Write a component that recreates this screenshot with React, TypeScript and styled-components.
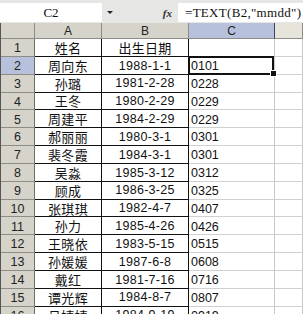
import React from "react";
import styled, { createGlobalStyle } from "styled-components";

const GlobalStyle = createGlobalStyle`
    html, body {
        margin: 0;
        padding: 0;
        background: #ffffff;
        overflow: hidden;
    }
`;

const ROW_H = 17.85;

const rows = [
    ["周向东", "1988-1-1", "0101"],
    ["孙璐", "1981-2-28", "0228"],
    ["王冬", "1980-2-29", "0229"],
    ["周建平", "1984-2-29", "0229"],
    ["郝丽丽", "1980-3-1", "0301"],
    ["裴冬霞", "1984-3-1", "0301"],
    ["吴淼", "1985-3-12", "0312"],
    ["顾成", "1986-3-25", "0325"],
    ["张琪琪", "1982-4-7", "0407"],
    ["孙力", "1985-4-26", "0426"],
    ["王晓依", "1983-5-15", "0515"],
    ["孙媛媛", "1987-6-8", "0608"],
    ["戴红", "1981-7-16", "0716"],
    ["谭光辉", "1984-8-7", "0807"],
    ["吕婧婧", "1984-9-19", "0919"],
];

const Page = styled.div`
    width: 303px;
    height: 314px;
    overflow: hidden;
    background: #ffffff;
`;

// formula bar
const FormulaBar = styled.div`
    display: flex;
    height: 23px;
    box-sizing: border-box;
    padding-top: 3px;
    padding-bottom: 1px;
    background: #e6e6e4;
`;

const NameBox = styled.div`
    width: 102px;
    background: #ffffff;
    display: flex;
    align-items: center;
    justify-content: center;
    font: 13px/1 "Liberation Serif", serif;
    color: #111;
`;

const DropButton = styled.div`
    width: 16px;
    display: flex;
    align-items: center;
    justify-content: center;
    &::after {
        content: "";
        border-left: 3px solid transparent;
        border-right: 3px solid transparent;
        border-top: 3px solid #222;
    }
`;

const FxLabel = styled.div`
    width: 60px;
    display: flex;
    align-items: center;
    justify-content: flex-end;
    padding-right: 6px;
    box-sizing: border-box;
    font: italic bold 11px "Liberation Serif", serif;
    color: #333;
`;

const FormulaField = styled.div`
    flex: 1;
    background: #ffffff;
    display: flex;
    align-items: center;
    padding-left: 7px;
    white-space: nowrap;
    overflow: hidden;
    font: 13px/1 "Liberation Serif", serif;
    letter-spacing: 0.3px;
    color: #111;
`;

// sheet
const Sheet = styled.div`
    display: grid;
    grid-template-columns: 34px 67px 87px 86px 1fr;
    grid-template-rows: 16px repeat(16, ${ROW_H}px);
    border-left: 1px solid #555;
`;

const Header = styled.div<{ $selected?: boolean; $light?: boolean }>`
    box-sizing: border-box;
    background: ${(p) => (p.$selected ? "#b7c1dc" : p.$light ? "#e7e4dc" : "#d6d3cb")};
    border-right: 1px solid ${(p) => (p.$selected ? "#3c4660" : "#8e8c86")};
    border-bottom: 1px solid #8e8c86;
    display: flex;
    align-items: center;
    justify-content: center;
    font: 12px/1 "Liberation Sans", sans-serif;
    color: #222;
`;

const RowHead = styled(Header)`
    border-right-color: #6e6c66;
    padding-top: 2px;
    font-size: 12.5px;
`;

const Cell = styled.div<{ $cjk?: boolean }>`
    box-sizing: border-box;
    border-right: 1px solid #111;
    border-bottom: 1px solid #111;
    display: flex;
    align-items: center;
    justify-content: center;
    white-space: nowrap;
    color: #111;
    font: ${(p) =>
        p.$cjk
            ? `13px/1 "Noto Sans CJK SC", sans-serif`
            : `12.5px/1 "Liberation Sans", sans-serif`};
    letter-spacing: ${(p) => (p.$cjk ? "0.3px" : "0.3px")};
    padding-top: ${(p) => (p.$cjk ? "0" : "1px")};
`;

const Plain = styled.div<{ $active?: boolean }>`
    position: relative;
    box-sizing: border-box;
    border-right: 1px solid #c8c8c8;
    border-bottom: 1px solid #d0d0d0;
    display: flex;
    align-items: center;
    padding: 2px 0 0 2px;
    font: 12.5px/1 "Liberation Sans", sans-serif;
    color: #111;
    ${(p) =>
        p.$active &&
        `
        &::after {
            content: "";
            position: absolute;
            inset: -1px 0 -1px -1px;
            border: 2px solid #111;
        }
    `}
`;

const FillHandle = styled.span`
    position: absolute;
    right: -3px;
    bottom: -3px;
    width: 5px;
    height: 5px;
    background: #111;
    border: 1px solid #fff;
    z-index: 2;
`;

const App = () => {
    return (
        <Page>
            <GlobalStyle />
            <FormulaBar>
                <NameBox>C2</NameBox>
                <DropButton />
                <FxLabel>fx</FxLabel>
                <FormulaField>=TEXT(B2,"mmdd")</FormulaField>
            </FormulaBar>
            <Sheet>
                <Header />
                <Header>A</Header>
                <Header>B</Header>
                <Header $selected>C</Header>
                <Header $light />

                <RowHead>1</RowHead>
                <Cell $cjk>姓名</Cell>
                <Cell $cjk>出生日期</Cell>
                <Plain />
                <Plain />

                {rows.map((row, i) => (
                    <React.Fragment key={i}>
                        <RowHead $selected={i === 0}>{i + 2}</RowHead>
                        <Cell $cjk>{row[0]}</Cell>
                        <Cell>{row[1]}</Cell>
                        <Plain $active={i === 0}>
                            {row[2]}
                            {i === 0 && <FillHandle />}
                        </Plain>
                        <Plain />
                    </React.Fragment>
                ))}
            </Sheet>
        </Page>
    );
};

export default App;
